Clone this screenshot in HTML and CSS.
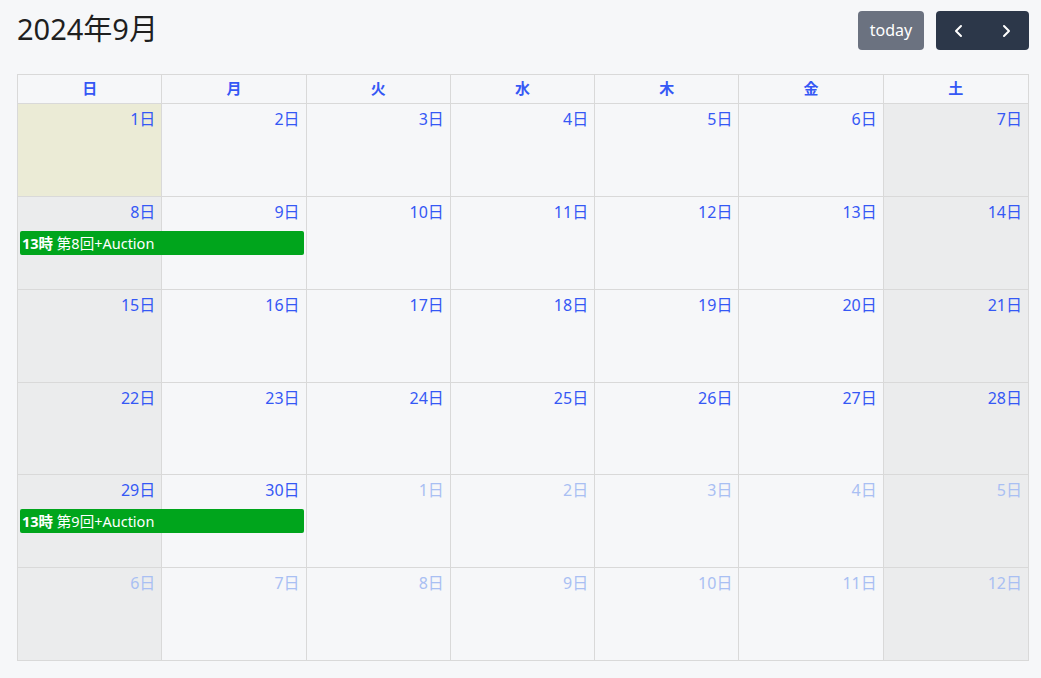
FILE: index.html
```html
<!DOCTYPE html>
<html lang="ja">
<head>
<meta charset="utf-8">
<link rel="stylesheet" href="styles.css">
</head>
<body>
<div class="cal">
  <div class="toolbar">
    <h2 class="title">2024年9月</h2>
    <div class="tools">
      <button class="btn today">today</button>
      <div class="btn-group">
        <button class="btn nav" aria-label="prev"><svg width="12" height="14" viewBox="0 0 12 14"><path d="M8 2 L3 7 L8 12" fill="none" stroke="#fff" stroke-width="2" stroke-linecap="round" stroke-linejoin="round"/></svg></button>
        <button class="btn nav" aria-label="next"><svg width="12" height="14" viewBox="0 0 12 14"><path d="M4 2 L9 7 L4 12" fill="none" stroke="#fff" stroke-width="2" stroke-linecap="round" stroke-linejoin="round"/></svg></button>
      </div>
    </div>
  </div>
  <div class="grid">
    <div class="head">
      <div class="dow">日</div><div class="dow">月</div><div class="dow">火</div><div class="dow">水</div><div class="dow">木</div><div class="dow">金</div><div class="dow">土</div>
    </div>
    <div class="week">
      <div class="day weekend today-cell"><span class="num">1日</span></div>
      <div class="day"><span class="num">2日</span></div>
      <div class="day"><span class="num">3日</span></div>
      <div class="day"><span class="num">4日</span></div>
      <div class="day"><span class="num">5日</span></div>
      <div class="day"><span class="num">6日</span></div>
      <div class="day weekend"><span class="num">7日</span></div>
    </div>
    <div class="week">
      <div class="day weekend"><span class="num">8日</span></div>
      <div class="day"><span class="num">9日</span></div>
      <div class="day"><span class="num">10日</span></div>
      <div class="day"><span class="num">11日</span></div>
      <div class="day"><span class="num">12日</span></div>
      <div class="day"><span class="num">13日</span></div>
      <div class="day weekend"><span class="num">14日</span></div>
      <div class="event"><b>13時</b> 第8回+Auction</div>
    </div>
    <div class="week">
      <div class="day weekend"><span class="num">15日</span></div>
      <div class="day"><span class="num">16日</span></div>
      <div class="day"><span class="num">17日</span></div>
      <div class="day"><span class="num">18日</span></div>
      <div class="day"><span class="num">19日</span></div>
      <div class="day"><span class="num">20日</span></div>
      <div class="day weekend"><span class="num">21日</span></div>
    </div>
    <div class="week short">
      <div class="day weekend"><span class="num">22日</span></div>
      <div class="day"><span class="num">23日</span></div>
      <div class="day"><span class="num">24日</span></div>
      <div class="day"><span class="num">25日</span></div>
      <div class="day"><span class="num">26日</span></div>
      <div class="day"><span class="num">27日</span></div>
      <div class="day weekend"><span class="num">28日</span></div>
    </div>
    <div class="week">
      <div class="day weekend"><span class="num">29日</span></div>
      <div class="day"><span class="num">30日</span></div>
      <div class="day other"><span class="num">1日</span></div>
      <div class="day other"><span class="num">2日</span></div>
      <div class="day other"><span class="num">3日</span></div>
      <div class="day other"><span class="num">4日</span></div>
      <div class="day weekend other"><span class="num">5日</span></div>
      <div class="event"><b>13時</b> 第9回+Auction</div>
    </div>
    <div class="week">
      <div class="day weekend other"><span class="num">6日</span></div>
      <div class="day other"><span class="num">7日</span></div>
      <div class="day other"><span class="num">8日</span></div>
      <div class="day other"><span class="num">9日</span></div>
      <div class="day other"><span class="num">10日</span></div>
      <div class="day other"><span class="num">11日</span></div>
      <div class="day weekend other"><span class="num">12日</span></div>
    </div>
  </div>
</div>
</body>
</html>
```
FILE: styles.css
```css
html, body {
  margin: 0;
  padding: 0;
  background: #f6f7f9;
  font-family: "Noto Sans", "Noto Sans CJK JP", sans-serif;
}
.cal {
  padding: 11px 12px 0 17px;
}
.toolbar {
  display: flex;
  justify-content: space-between;
  align-items: flex-start;
  height: 63px;
}
.title {
  margin: 0;
  font-size: 29px;
  font-weight: 400;
  line-height: 35px;
  color: #1f1f1f;
}
.tools {
  display: flex;
  gap: 12px;
}
.btn {
  border: none;
  font-family: "Noto Sans", sans-serif;
  color: #fff;
  font-size: 16px;
  height: 39px;
  border-radius: 4px;
  padding: 0;
  cursor: pointer;
}
.today {
  width: 66px;
  background: #6b7280;
  line-height: 39px;
}
.btn-group {
  display: flex;
  background: #2c3749;
  border-radius: 4px;
  width: 93px;
}
.nav {
  flex: 1;
  background: transparent;
  display: flex;
  align-items: center;
  justify-content: center;
}
.grid {
  border: 1px solid #d9d9d9;
  width: 1010px;
}
.head {
  display: grid;
  grid-template-columns: repeat(7, 1fr);
  height: 28px;
  border-bottom: 1px solid #d9d9d9;
}
.dow {
  text-align: center;
  font-weight: 700;
  font-size: 15px;
  line-height: 27px;
  color: #3558f5;
  border-right: 1px solid #d9d9d9;
}
.dow:last-child { border-right: none; }
.week {
  display: grid;
  grid-template-columns: repeat(7, 1fr);
  grid-template-rows: 34px 24px 1fr;
  height: 92px;
  border-bottom: 1px solid #d9d9d9;
}
.week.short { height: 91px; }
.week:last-child { border-bottom: none; }
.day {
  grid-row: 1 / -1;
  border-right: 1px solid #d9d9d9;
  display: flex;
  justify-content: flex-end;
  align-items: flex-start;
  padding: 5px 6px 0 0;
}
.day:nth-child(7) { border-right: none; }
.day:nth-child(1) { grid-column: 1; }
.day:nth-child(2) { grid-column: 2; }
.day:nth-child(3) { grid-column: 3; }
.day:nth-child(4) { grid-column: 4; }
.day:nth-child(5) { grid-column: 5; }
.day:nth-child(6) { grid-column: 6; }
.day:nth-child(7) { grid-column: 7; }
.weekend { background: #ebeced; }
.today-cell { background: #ebebd6; }
.num {
  font-size: 16px;
  line-height: 20px;
  color: #3558f5;
}
.other .num { color: #a9bff3; }
.event {
  grid-row: 2;
  grid-column: 1 / 3;
  margin: 0 3px 0 2px;
  background: #00a51c;
  border-radius: 2px;
  color: #fff;
  font-size: 14.5px;
  line-height: 24px;
  padding-left: 2px;
  white-space: nowrap;
}
.event b { font-weight: 700; }
```
